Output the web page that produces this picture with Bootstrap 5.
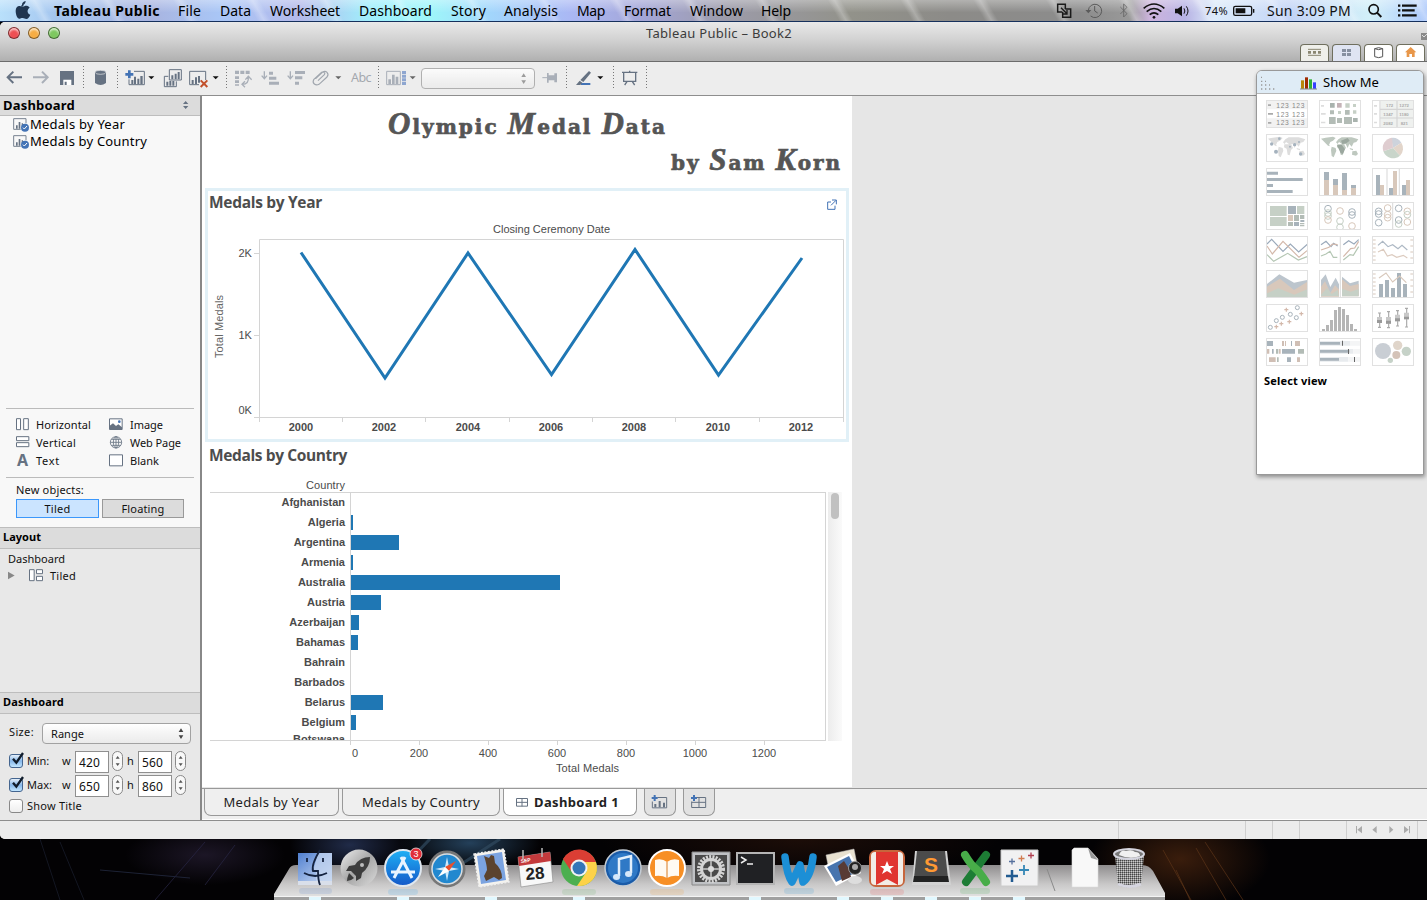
<!DOCTYPE html>
<html lang="en">
<head>
<meta charset="utf-8">
<title>Tableau Public - Book2</title>
<link href="https://cdn.jsdelivr.net/npm/bootstrap@5.3.0/dist/css/bootstrap.min.css" rel="stylesheet">
<style>
html,body{height:900px;overflow:hidden}
body{width:1427px;background:#000;font:11px/14px "Noto Sans","Open Sans",sans-serif;color:#111}
svg{display:block;flex:none}
svg text{font-family:"Liberation Sans",Arial,sans-serif}
[data-w]{white-space:nowrap;display:inline-block}
.menubar{height:22px;border-bottom:1px solid #16305c;background:
 linear-gradient(#ffffff55,#fff0 60%),
 repeating-linear-gradient(60deg,#fff0 0 34px,#ffffff44 40px,#fff0 46px 63px),
 linear-gradient(90deg,#b9e0fb 0,#a3c4ee 60px,#a8b4e0 150px,#a9c6f6 220px,#b4b9ea 300px,#a0effc 370px,#9ef6fa 430px,#a2d6fc 490px,#aab8f4 570px,#a4a6d8 640px,#9c9ba8 730px,#92928a 850px,#8c8b88 950px,#8c8c8c 1080px,#999 1130px,#cdb4dd 1150px,#b7b2e4 1185px,#dcebfa 1215px,#c3d4f6 1290px,#d2f0f9 1370px,#acc8fb 1427px)}
.menus{display:grid;grid-template-columns:124px 42px 50px 89px 92px 53px 73px 47px 66px 71px 60px;padding-left:22px;font-size:14px;line-height:21px;color:#000}
.win{height:817px;background:#ececec;border-radius:5px 0 0 5px;overflow:hidden}
.titlebar{height:40px;background:linear-gradient(#e9e9e9,#d2d2d2 45%,#b0b0b0);border-bottom:1px solid #6c6c6c}
.light{width:12px;height:12px;border-radius:50%;border:1px solid #0007;box-shadow:inset 0 2px 2px #fffa}
.pagetab{width:29px;height:17px;border:1px solid #6f6f5e;border-bottom:0;border-radius:4px 4px 0 0;background:#fff}
.tools{height:34px;border-bottom:1px solid #8e8e8e;background:#ededed;display:grid;padding:6px 0 0 0;
 grid-template-columns:28px 28px 26px 10px 24px 8px 38px 25px 38px 8px 26px 27px 24px 40px 27px 7px 37px 120px 24px 9px 38px 8px 25px 8px}
.dots{width:1px;height:23px;margin-left:1px;margin-top:-2px;background:repeating-linear-gradient(#777 0 1px,#0000 1px 3px)}
.aqua{border:1px solid #a2a2a2;border-radius:4px;background:linear-gradient(#fff,#f4f4f4 50%,#ebebeb)}
.side{width:202px;border-right:2px solid #888;background:#e8e8e8;height:724px}
.shead{height:21px;background:#dcdcdc;border-top:1px solid #bdbdbd;border-bottom:1px solid #bdbdbd;padding-left:3px;line-height:18px;font-weight:700;color:#000}
.pal{background:#f8f8f8}
.palgrid{display:grid;grid-template-columns:20px 73px 21px 60px;row-gap:0;grid-auto-rows:18px;line-height:18px}
.objbtn{height:19px;line-height:18px;text-align:center;border:1px solid #999;background:#dcdcdc;border-radius:0}
.objbtn.on{background:#cbe4ff;border-color:#3b97fb}
.num{width:34px;height:22px;border:1px solid #8f8f8f;background:#fff;padding:3px 0 0 3px;line-height:16px;font-size:12px}
.spin{width:11px;height:20px;border:1px solid #888;border-radius:6px;background:#f8f8f8}
.cbox{width:14px;height:14px;border:1px solid #888;border-radius:3px;background:linear-gradient(#fff,#eee)}
.cbox.on{border-color:#44658f;background:linear-gradient(#e5f0fa,#86b7ea 50%,#c2e6ff)}
.canvasarea{background:#e6e6e6;height:692px}
.sheet{width:650px;height:691px;background:#fff}
.dtitle{font-family:"DejaVu Serif",serif;font-weight:700;font-size:20px;line-height:34px;color:#555;-webkit-text-stroke:.7px #555}
.dtitle i{font-family:"Liberation Serif",serif;font-size:31px;font-style:italic}
.vhead{font:700 15.5px/20px "Open Sans","Noto Sans",sans-serif;color:#4d4d4d}
.ar{font-family:"Liberation Sans",Arial,sans-serif;color:#4b4b4b}
.yearbox{width:644px;height:254px;border:3px solid #e1f0f7;margin-left:3px}
.rows{height:249px;width:616px;margin-left:8px;border-top:1px solid #d4d4d4;border-bottom:1px solid #d4d4d4;border-right:1px solid #d4d4d4;overflow:hidden}
.brow{height:20px}
.brow>b{width:141px;padding-right:5px;text-align:right;line-height:18px;border-right:1px solid #d4d4d4;height:20px}
.brow:last-child>b{line-height:12px}
.brow>i{background:#1f77b4;height:15px;margin-top:2px}
.stab{height:27px;border:1px solid #999;border-top:0;border-radius:0 0 7px 7px;background:#efefef;font-size:13px;line-height:26px;color:#222}
.stab svg{margin-top:1px}
.stat{height:19px;border-top:1px solid #8e8e8e;background:#ececec}
.stat>span{border-left:1px solid #cfcfcf;height:18px}
.showme{position:absolute;left:1256px;top:70px;width:168px;height:405px;background:#fff;border:1px solid #999;border-radius:6px 6px 0 0;box-shadow:1px 2px 4px #0006}
.smhead{height:23px;background:#dfecf6;border-bottom:1px solid #b5b5b5;border-radius:5px 5px 0 0}
.thumbs{display:grid;grid-template-columns:53px 53px 42px;grid-auto-rows:34px;padding:6px 0 0 9px}
.desk{height:61px;background:
 radial-gradient(70px 26px at 470px 4px,#24405a,#0000),radial-gradient(60px 30px at 350px 6px,#202b48,#0000),
 radial-gradient(80px 30px at 205px 16px,#1c1626,#0000),radial-gradient(90px 50px at 1180px 20px,#3a1d0c,#0000),
 radial-gradient(200px 40px at 800px 0,#1c0d08,#0000),#030204}
</style>
</head>
<body>
<header class="menubar d-flex">
 <svg width="32" height="21" viewBox="15 0 96 63"><path fill="#1f3550" d="M86 14c-4-1-7 2-8 6 5 0 8-3 8-6zM92 3c-7 1-12 7-11 13 7-1 11-7 11-13zM62 32c0-11 8-16 15-13 4 2 7 2 11 0 5-3 12-1 16 4-9 6-8 17 2 21-3 7-7 13-12 13-4 0-6-3-11-3s-7 3-10 2C67 56 62 43 62 32z"/></svg>
 <nav class="menus">
  <b data-w="106">Tableau Public</b><span data-w="23">File</span><span data-w="31">Data</span><span data-w="70">Worksheet</span><span data-w="73">Dashboard</span><span data-w="35">Story</span><span data-w="54">Analysis</span><span data-w="28">Map</span><span data-w="47">Format</span><span data-w="53">Window</span><span data-w="30">Help</span>
 </nav>
 <div class="d-flex ms-auto" style="line-height:21px;width:372px;color:#111">
  <svg width="25" height="22" viewBox="225 0 75 66"><path d="M256 27V13h-23v23h14M256 27h16v25h-24V36" fill="none" stroke="#1a1a1a" stroke-width="4.500"/><path d="M243 23l18 18m0-11v12h-12" fill="none" stroke="#1a1a1a" stroke-width="4"/></svg>
  <svg width="36" height="22" viewBox="300 0 108 66"><g fill="none" stroke="#5b5b5b" stroke-width="3"><path d="M325 31a20 20 0 1 1 7 17"/><path d="M344 18v15l9 6"/></g><path fill="#5b5b5b" d="M316 30h18l-9 10z"/></svg>
  <svg width="24" height="22" viewBox="408 0 72 66"><path d="M421 21l20 20-10 10V12l10 10-20 20" fill="none" stroke="#666" stroke-width="2.500"/></svg>
  <svg width="31" height="22" viewBox="480 0 93 66"><g fill="none" stroke="#111" stroke-width="5"><path d="M491 25q31-26 62 0M500 35q22-19 44 0M509 44q13-11 26 0"/></g><circle cx="522" cy="52" r="4" fill="#111"/></svg>
  <svg width="31" height="22" viewBox="573 0 93 66"><path d="M585 26h8l13-9v32l-13-9h-8z" fill="#111"/><path d="M612 25q5 8 0 16M619 19q10 14 0 28" fill="none" stroke="#111" stroke-width="3"/></svg>
  <span style="width:30px;padding-left:3px;font-size:11px"><span data-w="23">74%</span></span>
  <svg width="31" height="22" viewBox="755 0 93 66"><rect x="760" y="19" width="54" height="27" rx="5" fill="none" stroke="#111" stroke-width="4"/><path d="M766 25h29v15h-29zM818 27h4v11h-4z" fill="#111"/></svg>
  <span style="width:99px;padding-left:4px;font-size:14px"><span data-w="84">Sun 3:09 PM</span></span>
  <svg width="31" height="22" viewBox="1150 0 93 66"><circle cx="1185" cy="28" r="14" fill="none" stroke="#111" stroke-width="5"/><path d="M1195 38l13 13" stroke="#111" stroke-width="6"/></svg>
  <svg width="28" height="22" viewBox="1243 0 84 66"><path d="M1258 17h7m5 0h44M1258 31h7m5 0h38M1258 46h7m5 0h44" stroke="#111" stroke-width="7"/></svg>
 </div>
</header>

<main class="win">
 <div class="titlebar d-flex">
  <div class="d-flex" style="width:640px;padding:5px 0 0 8px;gap:8px"><span class="light" style="background:#ee4f53"></span><span class="light" style="background:#f6ad44"></span><span class="light" style="background:#7ec860"></span></div>
  <div style="width:660px;font-size:13px;line-height:22px;color:#3b3b3b;padding-left:6px"><span data-w="146">Tableau Public – Book2</span></div>
  <div class="d-flex align-items-end" style="gap:3px;width:127px">
   <span class="pagetab" style="background:#efefea"><svg width="27" height="16" viewBox="963 138 81 48"><path d="M984 151h39M984 169h39" stroke="#8a8670" stroke-width="3"/><path d="M984 160h39" stroke="#8a8670" stroke-width="8" stroke-dasharray="9 6"/></svg></span>
   <span class="pagetab" style="background:#dfe4f2"><svg width="27" height="16" viewBox="1059 138 81 48"><path d="M1086 150h12v9h-12zM1101 150h12v9h-12zM1086 162h12v9h-12zM1101 162h12v9h-12z" fill="#8790a0"/></svg></span>
   <span class="pagetab"><svg width="27" height="16" viewBox="1155 138 81 48"><path d="M1184 149v24q12 6 24 0v-24q-12-6-24 0q12 6 24 0" fill="none" stroke="#555" stroke-width="3"/></svg></span>
   <span class="pagetab"><svg width="27" height="16" viewBox="1251 138 81 48"><path d="M1292 144l17 16h-5v14h-8v-9h-8v9h-8v-14h-5z" fill="#e8974a"/></svg></span>
   <svg width="6" height="39" viewBox="0 0 6 39" style="margin-left:-7px"><path d="M0 11h6v7H0z" fill="#8a8a8a"/><path d="M1 13l2 2 3-3" fill="none" stroke="#ddd"/></svg>
  </div>
 </div>
 <div class="tools">
  <svg width="28" height="20" viewBox="0 204 84 60"><path d="M66 232H24M40 215l-17 17 17 17" fill="none" stroke="#667282" stroke-width="6"/></svg>
  <svg width="28" height="20" viewBox="84 204 84 60"><path d="M99 232h42M126 215l17 17-17 17" fill="none" stroke="#a9afb8" stroke-width="6"/></svg>
  <svg width="26" height="20" viewBox="168 204 78 60"><path d="M180 213h42v42h-42z" fill="#667282"/><path d="M190 239h24v16h-24z" fill="#fff"/><path d="M194 245h6v10h-6z" fill="#667282"/></svg>
  <i class="dots"></i>
  <svg width="24" height="20" viewBox="276 204 72 60"><path d="M285 219v30q17 12 33 0v-30z" fill="#667282"/><ellipse cx="301.500" cy="217" rx="16" ry="6" fill="#667282" stroke="#e8e8e8" stroke-width="2"/></svg>
  <i class="dots"></i>
  <svg width="38" height="20" viewBox="372 204 114 60"><path d="M402 214h31v40h-46v-16" fill="none" stroke="#667282" stroke-width="3"/><path d="M394 240h6v12h-6zM402 230h6v22h-6zM412 236h6v16h-6zM421 228h7v24h-7z" fill="#667282"/><path d="M376 223h24M388 211v24" stroke="#4373b5" stroke-width="8"/><path d="M445 229h18l-9 9z" fill="#111"/></svg>
  <svg width="25" height="20" viewBox="486 204 75 60"><g fill="none" stroke="#667282" stroke-width="3"><path d="M508 209h36v31h-36zM505 229h-12v31h36v-16"/></g><path d="M514 226h6v12h-6zM524 221h6v17h-6zM533 216h6v22h-6zM499 245h6v12h-6zM508 243h6v14h-6zM517 243h6v14h-6z" fill="#667282"/></svg>
  <svg width="38" height="20" viewBox="561 204 114 60"><path d="M597 254h-28v-40h48v26" fill="none" stroke="#667282" stroke-width="3"/><path d="M575 240h6v12h-6zM585 232h6v20h-6zM594 228h6v20h-6z" fill="#667282"/><path d="M602 241l20 20m0-20l-20 20" stroke="#c2512c" stroke-width="6"/><path d="M638 229h18l-9 9z" fill="#111"/></svg>
  <i class="dots"></i>
  <svg width="26" height="20" viewBox="702 204 78 60"><path d="M708 217h48" stroke="#a9afb8" stroke-width="10" stroke-dasharray="12 4"/><path d="M714 229v28" stroke="#a9afb8" stroke-width="12" stroke-dasharray="8 4"/><path d="M730 253q20 0 18-22M739 239l9-10 10 10M738 244l-9 9 9 9" fill="none" stroke="#a9afb8" stroke-width="4"/></svg>
  <svg width="27" height="20" viewBox="780 204 81 60"><path d="M796 214v20M788 227l8 9 8-9" fill="none" stroke="#a9afb8" stroke-width="4"/><path d="M810 215h12v9h-12zM810 230h22v9h-22zM810 245h30v9h-30z" fill="#a9afb8"/></svg>
  <svg width="24" height="20" viewBox="861 204 72 60"><path d="M874 214v20M866 227l8 9 8-9" fill="none" stroke="#a9afb8" stroke-width="4"/><path d="M888 213h30v9h-30zM888 229h22v9h-22zM888 245h12v9h-12z" fill="#a9afb8"/></svg>
  <svg width="40" height="20" viewBox="933 204 120 60"><path d="M950 236l20-19q8-6 14 0t0 14l-24 22q-8 4-14-1t-2-13l24-22q5-3 8 0t0 7l-19 18" fill="none" stroke="#a0a6ae" stroke-width="3.500"/><path d="M1009 229h18l-9 9z" fill="#666"/></svg>
  <span style="font-size:12.500px;line-height:20px;color:#a4a8ae;padding-left:1px"><span data-w="20">Abc</span></span>
  <i class="dots"></i>
  <svg width="37" height="20" viewBox="1149 204 111 60"><path d="M1157 214h41v40h-41z" fill="none" stroke="#a9afb8" stroke-width="3"/><path d="M1162 238h8v14h-8zM1173 224h8v28h-8zM1184 230h8v22h-8z" fill="#a9afb8"/><path d="M1209 213v42" stroke="#8ea6d0" stroke-width="12" stroke-dasharray="9 2"/><path d="M1226 229h18l-9 9z" fill="#666"/></svg>
  <div class="aqua d-flex justify-content-end" style="width:114px;height:21px;opacity:.8;margin-left:0"><svg width="14" height="18" viewBox="0 0 42 54"><path d="M4 24l7-11 7 11zM4 34l7 11 7-11z" fill="#888"/></svg></div>
  <svg width="24" height="20" viewBox="480 204 72 60"><path d="M484 233h14" stroke="#a9afb8" stroke-width="3"/><path d="M498 219h5v7h17v-6h8v27h-8v-6h-17v7h-5z" fill="#a9afb8"/></svg>
  <i class="dots"></i>
  <svg width="38" height="20" viewBox="579 204 114 60"><path d="M600 255h28v-6h-28z" fill="#4373b5"/><path d="M624 213l6 5-23 28-9-6zM596 242l8 6-6 7h-13z" fill="#667282"/><path d="M649 229h18l-9 9z" fill="#111"/></svg>
  <i class="dots"></i>
  <svg width="25" height="20" viewBox="717 204 75 60"><path d="M723 217h46M728 217v27h36v-27M746 212v4M738 245l-7 10M754 245l7 10" fill="none" stroke="#667282" stroke-width="4"/></svg>
  <i class="dots"></i>
 </div>

 <div class="d-flex" style="height:724px">
  <aside class="side d-flex flex-column">
   <div class="pal" style="height:431px">
    <div class="shead d-flex" style="font-size:13px;height:20px;border-top:0"><span data-w="72">Dashboard</span><svg width="8" height="18" viewBox="0 0 24 54" style="margin-left:107px"><path d="M3 24l8-9 8 9zM3 30l8 9 8-9z" fill="#667282"/></svg></div>
    <div style="height:292px;padding:0 0 0 13px;font-size:13px;line-height:17px;color:#000">
     <div class="d-flex"><svg width="17" height="17" viewBox="39 348 51 51"><path d="M62 388H41v-32h37v14" fill="none" stroke="#778290" stroke-width="3"/><path d="M48 376h5v10h-5zM56 366h5v20h-5zM65 370h4v8h-4z" fill="#667282"/><circle cx="75" cy="383" r="12" fill="#4373b5"/><path d="M69 383l4 4 8-9" fill="none" stroke="#fff" stroke-width="3"/></svg><span data-w="95">Medals by Year</span></div>
     <div class="d-flex"><svg width="17" height="17" viewBox="39 348 51 51"><path d="M62 388H41v-32h37v14" fill="none" stroke="#778290" stroke-width="3"/><path d="M48 376h5v10h-5zM56 366h5v20h-5zM65 370h4v8h-4z" fill="#667282"/><circle cx="75" cy="383" r="12" fill="#4373b5"/><path d="M69 383l4 4 8-9" fill="none" stroke="#fff" stroke-width="3"/></svg><span data-w="117">Medals by Country</span></div>
    </div>
    <div style="margin:0 6px;border-top:1px solid #bbb;border-bottom:1px solid #bbb;height:70px;padding:7px 0 0 10px">
     <div class="palgrid">
      <svg width="14" height="18" viewBox="48 62 42 54"><path d="M49.500 70h12v33h-12zM71 70h14v33h-14z" fill="#fff" stroke="#667282" stroke-width="3"/></svg><span data-w="55">Horizontal</span>
      <svg width="14" height="18" viewBox="327 62 42 54"><path d="M328.500 70.500h38v32h-38z" fill="#fff" stroke="#667282" stroke-width="3"/><path d="M328 101V92l11-8 9 8 7-5 11 9v6z" fill="#667282"/><circle cx="358" cy="79" r="4" fill="#4373b5"/></svg><span data-w="33">Image</span>
      <svg width="14" height="18" viewBox="48 116 42 54"><path d="M49.500 124h37v12h-37zM49.500 142h37v12h-37z" fill="#fff" stroke="#667282" stroke-width="3"/></svg><span data-w="40">Vertical</span>
      <svg width="14" height="18" viewBox="327 116 42 54"><g fill="none" stroke="#667282" stroke-width="2.500"><circle cx="348" cy="141" r="17"/><ellipse cx="348" cy="141" rx="8" ry="17"/><path d="M331 141h34M348 124v34M334 132h28M334 150h28"/></g></svg><span data-w="51">Web Page</span>
      <b style="font-size:16px;line-height:17px;color:#667282;padding-left:1px">A</b><span data-w="24">Text</span>
      <svg width="14" height="18" viewBox="327 170 42 54"><path d="M328.500 178.500h39v33h-39z" fill="#fff" stroke="#667282" stroke-width="3"/></svg><span data-w="29">Blank</span>
     </div>
    </div>
    <div style="padding:5px 0 0 16px"><span data-w="68">New objects:</span>
     <div class="d-flex" style="gap:3px;margin-top:2px"><div class="objbtn on" style="width:83px"><span data-w="26">Tiled</span></div><div class="objbtn" style="width:82px"><span data-w="43">Floating</span></div></div>
    </div>
   </div>
   <div class="shead" style="height:22px;line-height:18px"><span data-w="38">Layout</span></div>
   <div style="height:143px;padding:0 0 0 8px;line-height:17px">
    <div style="padding-top:1px"><span data-w="57">Dashboard</span></div>
    <div class="d-flex"><svg width="42" height="17" viewBox="24 513 126 51"><path d="M22 526v25l22-12.500z" fill="#888"/><path d="M88.500 521h14v33h-14zM109.500 521h18v12h-18zM109.500 541h18v13h-18z" fill="#fff" stroke="#667282" stroke-width="3"/></svg><span data-w="26">Tiled</span></div>
   </div>
   <div class="shead" style="height:22px;line-height:18px"><span data-w="61">Dashboard</span></div>
   <div style="padding:9px 0 0 9px">
    <div class="d-flex" style="height:28px"><span style="width:33px;line-height:18px"><span data-w="25">Size:</span></span><div class="aqua d-flex justify-content-between" style="width:149px;height:21px;padding-left:8px;line-height:19px"><span data-w="33">Range</span><svg width="14" height="19" viewBox="0 0 42 57"><path d="M8 24l7-11 7 11zM8 34l7 11 7-11z" fill="#444"/></svg></div></div>
    <div class="d-flex" style="height:24px"><span class="cbox on" style="margin-top:3px"><svg width="16" height="14" viewBox="0 0 48 42" style="margin-top:-3px;overflow:visible"><path d="M9 20l10 12L39 3" fill="none" stroke="#111d2c" stroke-width="7"/></svg></span><span style="width:39px;padding:3px 0 0 4px"><span data-w="22">Min:</span></span><span style="width:13px;padding-top:3px"><span data-w="8">w</span></span><span class="num"><span data-w="21">420</span></span><span class="spin" style="margin:0 4px 0 3px"><svg width="9" height="18" viewBox="0 0 27 54"><path d="M8 20l6-8 6 8zM8 34l6 8 6-8z" fill="#555"/></svg></span><span style="width:11px;padding-top:3px">h</span><span class="num"><span data-w="21">560</span></span><span class="spin" style="margin-left:3px"><svg width="9" height="18" viewBox="0 0 27 54"><path d="M8 20l6-8 6 8zM8 34l6 8 6-8z" fill="#555"/></svg></span></div>
    <div class="d-flex" style="height:24px"><span class="cbox on" style="margin-top:3px"><svg width="16" height="14" viewBox="0 0 48 42" style="margin-top:-3px;overflow:visible"><path d="M9 20l10 12L39 3" fill="none" stroke="#111d2c" stroke-width="7"/></svg></span><span style="width:39px;padding:3px 0 0 4px"><span data-w="25">Max:</span></span><span style="width:13px;padding-top:3px"><span data-w="8">w</span></span><span class="num"><span data-w="21">650</span></span><span class="spin" style="margin:0 4px 0 3px"><svg width="9" height="18" viewBox="0 0 27 54"><path d="M8 20l6-8 6 8zM8 34l6 8 6-8z" fill="#555"/></svg></span><span style="width:11px;padding-top:3px">h</span><span class="num"><span data-w="21">860</span></span><span class="spin" style="margin-left:3px"><svg width="9" height="18" viewBox="0 0 27 54"><path d="M8 20l6-8 6 8zM8 34l6 8 6-8z" fill="#555"/></svg></span></div>
    <div class="d-flex"><span class="cbox"></span><span style="padding-left:4px"><span data-w="55">Show Title</span></span></div>
   </div>
  </aside>

  <section class="flex-grow-1">
   <div class="canvasarea">
    <div class="sheet">
     <div style="height:92px;padding-top:11px">
      <div class="dtitle" style="padding-left:186px;height:36px"><span data-w="279"><i>O</i>lympic <i>M</i>edal <i>D</i>ata</span></div>
      <div class="dtitle" style="padding-left:469px;height:36px"><span data-w="171">by <i>S</i>am <i>K</i>orn</span></div>
     </div>
     <div class="yearbox">
      <div class="d-flex justify-content-between" style="height:26px;padding:1px 8px 0 1px"><span class="vhead"><span data-w="113">Medals by Year</span></span><svg width="12" height="22" viewBox="0 0 36 66"><path d="M15 30H5v22h22V41M18 24h13v13M30 25L15 40" fill="none" stroke="#4373b5" stroke-width="3"/></svg></div>
      <svg width="638" height="222" viewBox="208 217 638 222" font-size="11" fill="#4b4b4b">
       <text x="493" y="233" textLength="117">Closing Ceremony Date</text>
       <path d="M259.500 422V239.500H843.500V422M254 417.500H844M254 253.500h5M254 335.500h5M342.500 418v4M425.500 418v4M509.500 418v4M592.500 418v4M675.500 418v4M759.500 418v4" fill="none" stroke="#d4d4d4"/>
       <text x="238.500" y="257">2K</text><text x="238.500" y="339">1K</text><text x="238.500" y="414">0K</text>
       <text transform="translate(223 358) rotate(-90)" textLength="63" fill="#666">Total Medals</text>
       <path d="M301 252.500L385 378L468 253L551.500 374.500L635 249.500L718.500 375L802 258" fill="none" stroke="#1f77b4" stroke-width="3"/>
       <g font-weight="700" text-anchor="middle"><text x="301" y="431">2000</text><text x="384" y="431">2002</text><text x="468" y="431">2004</text><text x="551" y="431">2006</text><text x="634" y="431">2008</text><text x="718" y="431">2010</text><text x="801" y="431">2012</text></g>
      </svg>
     </div>
     <div style="padding:3px 0 0 7px;height:35px"><span class="vhead"><span data-w="138">Medals by Country</span></span></div>
     <div class="ar text-end" style="width:143px;height:15px;line-height:16px"><span data-w="39">Country</span></div>
     <div class="d-flex">
      <div class="rows ar" id="bars"></div>
      <div style="width:14px;margin-left:2px;height:249px;background:linear-gradient(90deg,#ececec,#fafafa);padding:1px 3px"><div style="width:8px;height:26px;border-radius:4px;background:#c1c1c1"></div></div>
     </div>
     <svg width="640" height="46" viewBox="202 741 640 46" font-size="11" fill="#4b4b4b" text-anchor="middle">
      <path d="M350.500 741v4M419.500 741v4M488.500 741v4M557.500 741v4M626.500 741v4M695.500 741v4M764.500 741v4" stroke="#d4d4d4"/>
      <text x="355" y="757">0</text><text x="419" y="757">200</text><text x="488" y="757">400</text><text x="557" y="757">600</text><text x="626" y="757">800</text><text x="695" y="757">1000</text><text x="764" y="757">1200</text>
      <text x="587.500" y="772" textLength="63">Total Medals</text>
     </svg>
    </div>
   </div>
   <div class="d-flex" style="height:32px;background:#efefef;padding-left:2px;border-top:1px solid #999;border-bottom:1px solid #fff">
    <div class="stab text-center" style="width:135px"><span data-w="96">Medals by Year</span></div>
    <div class="stab text-center" style="width:158px;margin-left:3px"><span data-w="118">Medals by Country</span></div>
    <div class="stab d-flex bg-white" style="width:134px;margin-left:3px;padding-left:12px"><svg width="18" height="26" viewBox="48 180 54 78"><path d="M49.500 205.500h33v23h-33zM66 205v24M49 217h34" fill="none" stroke="#667282" stroke-width="3"/></svg><b data-w="85">Dashboard 1</b></div>
    <div class="stab" style="width:32px;margin-left:7px;background:#e2e2e2"><svg width="30" height="25" viewBox="435 180 90 75"><path d="M472 202.500h28v31h-43v-19" fill="none" stroke="#667282" stroke-width="3"/><path d="M463 222h6v10h-6zM476 213h6v19h-6zM489 218h6v14h-6z" fill="#667282"/><path d="M455 204h18M464 195v18" stroke="#4373b5" stroke-width="6"/></svg></div>
    <div class="stab" style="width:32px;margin-left:7px;background:#e2e2e2"><svg width="30" height="25" viewBox="552 180 90 75"><path d="M590 202.500h27v30h-42v-18M597 202v30M575 217h42" fill="none" stroke="#667282" stroke-width="3"/><path d="M573 204h18M582 195v18" stroke="#4373b5" stroke-width="6"/></svg></div>
   </div>
  </section>
 </div>
 <footer class="stat d-flex justify-content-end"><span style="width:127px"></span><span style="width:27px"></span><span style="width:27px"></span><span style="width:47px"></span><span style="width:71px"><svg width="70" height="18" viewBox="738 63 210 54"><path d="M765 78h3v22h-3zM783 78v22l-14-11zM827 78v22l-13-11zM865 78v22l12-11zM909 78v22l14-11zM924 78h3v22h-3z" fill="#aaa"/></svg></span><span style="width:10px"></span></footer>
</main>

<div class="desk">
 <svg width="1427" height="61" viewBox="0 839 1427 61" >
  <defs>
   <linearGradient id="shelf" x1="0" y1="0" x2="0" y2="1"><stop offset="0" stop-color="#8f8d8e"/><stop offset=".6" stop-color="#c9c8c8"/><stop offset="1" stop-color="#e2e2e2"/></linearGradient>
   <linearGradient id="blu" x1="0" y1="0" x2="0" y2="1"><stop offset="0" stop-color="#1fb0f5"/><stop offset="1" stop-color="#1458c8"/></linearGradient>
   <linearGradient id="fin" x1="0" y1="0" x2="1" y2="1"><stop offset="0" stop-color="#4f7fd0"/><stop offset="1" stop-color="#d0def4"/></linearGradient>
   <linearGradient id="sil" x1="0" y1="0" x2="1" y2="1"><stop offset="0" stop-color="#eee"/><stop offset=".5" stop-color="#a6a6a6"/><stop offset="1" stop-color="#ddd"/></linearGradient>
   <pattern id="mesh" width="2" height="2" patternUnits="userSpaceOnUse"><rect width="2" height="2" fill="#8a8a8a"/><rect width="1" height="1" fill="#444"/><rect x="1" y="1" width="1" height="1" fill="#ccc"/></pattern>
  </defs>
  <g stroke="#5d3518" fill="none" opacity=".7"><path d="M1163 850l28 50M1205 842l38 58M1196 848l30 52M1176 870l14 30"/><path d="M205 842l-50 58M235 845l-30 40" stroke="#2a2848"/><path d="M100 870l90 8" stroke="#28304a" /><path d="M430 839l-25 26M500 839l-40 26" stroke="#304a60" stroke-width="3"/><path d="M40 839l20 61M60 842l24 58" stroke="#1b2030"/></g>
  <path d="M296 865H1142Q1149 865 1153 871L1165 893V897H274V894L289 869Q291 865 296 865z" fill="url(#shelf)"/>
  <path d="M274 897h891v3H274z" fill="#a0a0a0"/><path d="M274 896.500h891" stroke="#f4f4f4"/>
  <path d="M309 898.500h12M397 898.500h12M485 898.500h12M573 898.500h12M749 898.500h12M837 898.500h12M881 898.500h12M925 898.500h12M969 898.500h12M1013 898.500h12" stroke="#e1f8ff" stroke-width="3"/>
  <g opacity=".15"><rect x="299" y="888" width="33" height="6" rx="3" fill="#4f7fd0"/><rect x="388" y="889" width="30" height="6" rx="3" fill="#1fa0f5"/><rect x="562" y="889" width="34" height="6" rx="3" fill="#5a5"/><rect x="650" y="889" width="34" height="6" rx="3" fill="#f7941d"/><rect x="784" y="888" width="30" height="6" rx="3" fill="#1c90d5"/><rect x="870" y="889" width="34" height="6" rx="3" fill="#e33"/><rect x="960" y="888" width="30" height="6" rx="3" fill="#3a4"/></g>
  <!-- Finder -->
  <path d="M298 853h34v28h-34z" fill="url(#fin)"/><path d="M318 853h14v28h-16v-9h-3q3-12 5-19z" fill="#c5d6f0" opacity=".7"/><path d="M298 881h34v4h-34z" fill="#d9dfea"/><path d="M320 850q-9 15-7 21h5q0 9 2 14M304 873q11 6 23 0M307 858v4M323 858v4" fill="none" stroke="#15233f" stroke-width="1.800"/>
  <!-- Launchpad -->
  <circle cx="359" cy="868" r="18.500" fill="url(#sil)"/><path d="M370 857q-10 0-15 8l-6 1-3 5 5 0 5 5 0 5 5-3 1-5q8-6 8-16zM349 873q-2 5-2 8 4 0 7-3z" fill="#3d3d3d"/><circle cx="362" cy="865" r="2" fill="#bbb"/>
  <!-- App Store -->
  <circle cx="403" cy="868" r="18" fill="url(#blu)" stroke="#dfe7ef" stroke-width="2"/><path d="M405 857l-11 21M401 857l11 21M391 872h24" stroke="#e9f4ff" stroke-width="3"/><circle cx="416" cy="854" r="6" fill="#e12f39" stroke="#fff" stroke-width=".7"/><text x="416" y="857" font-size="9" fill="#fff" text-anchor="middle">3</text>
  <!-- Safari -->
  <circle cx="447" cy="869" r="17" fill="#2288cf" stroke="#777" stroke-width="3"/><circle cx="447" cy="869" r="15" fill="none" stroke="#ddd" stroke-width="1.500"/><path d="M447 857l2 10 10 2-10 2-2 10-2-10-10-2 10-2z" fill="#cfe9fa"/><path d="M456 861l-7 10-4-4z" fill="#e8502c"/><path d="M438 877l7-10 4 4z" fill="#fff"/>
  <!-- Mail -->
  <path d="M474 854l30-5 5 33-30 5z" fill="#f5f3ee" stroke="#eee" stroke-dasharray="2 1.500" stroke-width="1.500"/><path d="M477 856l25-4 4 28-25 4z" fill="#7ba3e0"/><path d="M484 856l5 2 2-3 3 1 1 7q7 6 7 15l-3 2-5-3-8 4-2-5 3-6q0-5-3-14z" fill="#5b432e"/>
  <!-- Calendar -->
  <path d="M518 857l32-5 3 30-32 5z" fill="#f8f8f8" stroke="#888" stroke-width=".6"/><path d="M518 857l32-5 1 9-32 5z" fill="#c33a3c"/><path d="M523 850v9M542 848v9" stroke="#bbb" stroke-width="1.500"/><text x="521" y="863" font-size="5" fill="#fff" font-weight="700" transform="rotate(-8 521 863)">SEP</text><text x="526" y="880" font-size="17" font-weight="700" fill="#222" transform="rotate(-5 526 880)" textLength="19">28</text>
  <!-- Chrome -->
  <circle cx="579" cy="868" r="18" fill="#4caf50"/><path d="M563 859A18 18 0 0 1 596 862H579L571 871z" fill="#db3e34"/><path d="M596 862A18 18 0 0 1 577 886L587 871L584 862z" fill="#fdd249"/><circle cx="579" cy="868" r="8.500" fill="#f2f2f2"/><circle cx="579" cy="868" r="6.500" fill="#3576b8"/>
  <!-- iTunes -->
  <circle cx="623" cy="868" r="18" fill="#1a5ba8" stroke="#c4ccd4" stroke-width="1.500"/><circle cx="623" cy="868" r="15" fill="#2f79c6"/><path d="M619 876V859l12-3v17" fill="none" stroke="#e4f0fc" stroke-width="2.500"/><ellipse cx="616.500" cy="877" rx="3.500" ry="3" fill="#d6e8fa"/><ellipse cx="628.500" cy="874" rx="3.500" ry="3" fill="#d6e8fa"/>
  <!-- iBooks -->
  <circle cx="667" cy="868" r="18" fill="#f78f25" stroke="#fff" stroke-width="2"/><path d="M655 860q7-2 12 2 5-4 12-2v16q-7-1-12 2-5-3-12-2z" fill="#fffaf2"/><path d="M667 862v16" stroke="#d87b20"/>
  <!-- System Preferences -->
  <path d="M692 852h38v33h-38z" fill="#bfc1c4" stroke="#888"/><path d="M695 855h32v27h-32z" fill="#4a4a4a"/><circle cx="711" cy="869" r="12" fill="none" stroke="#d4d4d4" stroke-width="4" stroke-dasharray="2 1.200"/><circle cx="711" cy="869" r="9.500" fill="none" stroke="#d4d4d4" stroke-width="3"/><path d="M711 861v16M703 869h16" stroke="#aaa" stroke-width="2"/><circle cx="711" cy="869" r="3" fill="#ddd"/>
  <!-- Terminal -->
  <path d="M737 853h37v31h-37z" fill="#202124" stroke="#b5b5b5" stroke-width="2"/><path d="M741 857l5 3-5 3M747 864h6" fill="none" stroke="#eee" stroke-width="1.500"/>
  <!-- Word -->
  <path d="M785 857q2 18 7 25l8-17 3 17q8-6 10-25" fill="none" stroke="#1c8fd6" stroke-width="7.500" stroke-linejoin="round" stroke-linecap="round"/>
  <!-- iPhoto -->
  <path d="M826 855l28-6 4 20-28 6z" fill="#e8e1d0" stroke="#bbb" stroke-width=".5"/><path d="M824 866l26-13 11 20-25 13z" fill="#fff"/><path d="M827 867l22-11 8 16-21 10z" fill="#4774ae"/><path d="M838 866l6-5 5 8 2 8-9 4z" fill="#583b34"/><circle cx="855" cy="868" r="6.500" fill="#222" stroke="#999"/><ellipse cx="855" cy="880" rx="7" ry="4" fill="#ddd"/><circle cx="855" cy="867" r="3" fill="#aaa"/>
  <!-- Wunderlist -->
  <rect x="869" y="850" width="36" height="37" rx="7" fill="#c7653c"/><rect x="871" y="852" width="32" height="33" rx="4" fill="#f2ece6"/><path d="M876 852h22v33l-11-6-11 6z" fill="#e03530"/><path d="M887 861l2 5h5l-4 3 2 5-5-3-5 3 2-5-4-3h5z" fill="#fff"/>
  <!-- Sublime Text -->
  <path d="M915 851h32l4 34h-39z" fill="#d2d2d2"/><path d="M917 851h28l3 27h-34z" fill="#4b4b4b"/><path d="M914 876h34l1 6h-36z" fill="#222"/><text x="931" y="872" font-size="21" font-weight="700" fill="#ff9933" text-anchor="middle">S</text>
  <!-- Excel -->
  <path d="M986 855l-20 27" stroke="#1d7d35" stroke-width="8" stroke-linecap="round"/><path d="M965 855q6 10 10 13t11 14" fill="none" stroke="#48ad49" stroke-width="8" stroke-linecap="round"/>
  <!-- Tableau -->
  <path d="M1001 850h37v36h-37z" fill="#f1f1f2" stroke="#ccc"/><path d="M1006 876h12M1012 870v12" stroke="#225b91" stroke-width="2.500"/><path d="M1019 870h10M1024 865v10" stroke="#3587b6" stroke-width="1.800"/><path d="M1009 861.500h6M1012 858.500v6" stroke="#56709d" stroke-width="1.300"/><path d="M1018.500 858.500h6M1021.500 855.500v6" stroke="#d17c50" stroke-width="1.300"/><path d="M1028 855.500h6M1031 852.500v6" stroke="#b13f50" stroke-width="1.300"/>
  <path d="M1047 869l8 22" stroke="#8a8a8a"/>
  <!-- Document -->
  <path d="M1072 850l2-2h14l10 11v28h-26z" fill="#f8f8f8" stroke="#ddd" stroke-width=".6"/><path d="M1088 848l3 10 7 2z" fill="#999"/>
  <!-- Trash -->
  <path d="M1115 855h29l-3 30q-12 5-23 0z" fill="url(#mesh)"/><ellipse cx="1129" cy="854" rx="15" ry="5" fill="#777" stroke="#d5d5df" stroke-width="2"/><path d="M1119 855q2-6 7-4 6-2 9 1 5 0 5 4-10 4-21-1z" fill="#f1f1f1"/><path d="M1118 884q11 5 23 0" fill="none" stroke="#d5d5df" stroke-width="3"/>
 </svg>
</div>

<aside class="showme">
 <div class="smhead d-flex" style="font-size:13px;line-height:22px;color:#000">
  <svg width="66" height="22" viewBox="21 17 198 66"><path d="M33 36h3M33 48h15M33 59h27M33 71h42" stroke="#999" stroke-width="4" stroke-dasharray="4 8"/><path d="M153 45h9v25h-9z" fill="#b8860b"/><path d="M165 36h9v34h-9z" fill="#a02a00"/><path d="M177 42h9v28h-9z" fill="#2eb135"/><path d="M189 51h9v19h-9z" fill="#3440ff"/><path d="M150 71h51" stroke="#555" stroke-width="2"/></svg>
  <span data-w="56">Show Me</span></div>
 <div class="thumbs" id="thumbs"></div>
 <b data-w="63" style="margin:2px 0 0 7px;color:#000">Select view</b>
</aside>

<script>
// Medal bars: country name and bar length in pixels
const medals = [["Afghanistan",0],["Algeria",2],["Argentina",48],["Armenia",2],["Australia",209],["Austria",30],["Azerbaijan",8],["Bahamas",7],["Bahrain",0],["Barbados",0],["Belarus",32],["Belgium",5],["Botswana",0]];
document.getElementById("bars").innerHTML = medals.map(([n,w]) => `<div class="brow d-flex"><b>${n}</b><i style="width:${w}px"></i></div>`).join("");

// Show Me chart thumbnails
const g="#b3bcb6", s="#a8b3bb", t="#d8c8bb", m="#c6d0c6";
const ring=(c,a)=>`<g fill="none" stroke="${c}" stroke-width="3">${a.map(p=>`<circle cx="${p[0]}" cy="${p[1]}" r="10"/>`).join("")}</g>`;
const ln=(c,d)=>`<path d="${d}" fill="none" stroke="${c}" stroke-width="3.5"/>`;
const fl=(c,d)=>`<path d="${d}" fill="${c}"/>`;
const land="M6 14l14-3 22-3 8 4-8 8-8 4-4 9 4 4-7-2-8-8-8-8zM38 38l12 4 2 8-8 20-6-4-2-18zM58 16l10-6 30 0 20 6-6 8-8 2-6 12-7-8-5 12-6-12-8 2-12-8-4 6-5-5zM55 31l20-1 6 12-6 6-4 16-6-2-3-18-8-4zM100 52l12-2 5 10-6 5-12-3zM92 42l10 3 0 4-9-3z";
const T=[
 fl("#f2f2f2","M3 3h120v25H3zM3 55h120v26H3z")+fl("#aaa","M6 13h9v5H6zM6 39h15v5H6zM6 66h10v5H6z")+`<g font-size="20" fill="#888"><text x="31" y="23" textLength="84">123 123</text><text x="31" y="50" textLength="84">123 123</text><text x="31" y="75" textLength="84">123 123</text></g>`,
 fl("#ddd","M6 15h9v5H6zM6 39h14v5H6zM6 65h13v5H6z")+fl("#a9b3ae","M33 9h14v14H33zM102 54h14v12h-14z")+fl("#c4b3b7","M54 9h14v14H54z")+fl(m,"M79 10h13v13H79zM102 12h9v9h-9zM57 33h9v9h-9zM102 31h10v10h-10z")+fl(g,"M33 31h12v12H33zM78 30h14v14H78zM30 51h20v21H30zM54 54h15v15H54zM75 51h24v21H75z"),
 fl("#eff1ef","M27 3h96v78H27z")+ln("#d4d4d4","M24 3v78M75 3v78M24 28h99M24 54h99")+fl("#ddd","M6 15h9v5H6zM6 39h9v5H6zM6 65h9v5H6z")+`<g font-size="13" fill="#aaa" font-weight="700"><text x="42" y="21">172</text><text x="82" y="21">1272</text><text x="34" y="48">1347</text><text x="82" y="48">1180</text><text x="34" y="74">2082</text><text x="86" y="74">821</text></g>`,
 fl("#ddd",land)+`<g fill="#a5b2be"><circle cx="17" cy="30" r="5"/><circle cx="30" cy="53" r="6"/><circle cx="86" cy="32" r="5"/><circle cx="99" cy="24" r="3"/><circle cx="104" cy="60" r="5"/><circle cx="40" cy="14" r="4"/><circle cx="72" cy="38" r="3"/></g>`,
 fl("#bec8bf",land)+fl("#9ba79e","M66 20l20-8 6 8-10 8-12 2zM54 34l14-2 10 14-6 14-7-2z"),
 `<path d="M63 42L57 12A31 31 0 0 1 88 26z" fill="#cdd3dc"/><path d="M63 42L88 26A31 31 0 0 1 84 65z" fill="#e2d5ca"/><path d="M63 42L84 65A31 31 0 0 1 34 52z" fill="#c9d5ca"/><path d="M63 42L34 52A31 31 0 0 1 60 11z" fill="#dfcdd0"/>`,
 fl(s,"M3 11h33v9H3zM3 30h107v9H3zM3 48h18v9H3zM3 66h77v9H3z"),
 fl(s,"M15 12h15v25H15zM42 33h15v18H42zM69 15h15v51H69zM96 51h15v9H96z")+fl(t,"M15 36h15v45H15zM42 51h15v30H42zM69 66h15v15H69zM96 60h15v21H96z"),
 ln("#ddd","M45 3v78M82 3v78")+fl(s,"M12 21h12v60H12zM51 60h12v21H51zM90 51h12v30H90z")+fl(t,"M24 51h12v30H24zM63 9h12v72H63zM102 36h12v45h-12z"),
 fl(m,"M12 12h50v30H12zM12 45h50v27H12zM93 12h22v24H93z")+fl(s,"M66 12h24v24H66zM84 60h15v12H84zM103 54h12v6h-12z")+fl(t,"M66 39h15v18H66z")+fl(g,"M84 39h15v18H84zM102 39h13v12h-13zM66 60h15v12H66zM102 63h13v4h-13zM102 69h13v4h-13z"),
 ring(s,[[27,20],[99,30],[99,39]])+ring(m,[[27,33],[27,42],[63,57],[63,76]])+ring(t,[[63,27],[27,54],[99,72]]),
 ln("#ddd","M62 3v78")+ring(s,[[20,28],[20,36],[80,19],[80,54],[20,62]])+ring(t,[[47,18],[47,38],[47,47],[106,28],[106,60]])+ring(m,[[80,66],[106,38]]),
 ln("#9aa9ba","M3 24l14-14 34 36 22-22 25 24 27-24")+ln("#d3b8aa","M3 30l16 24 32-38 48 48 24-20")+ln("#b4c6b3","M3 56l20 20 42-24 32 20 26-10"),
 ln("#ddd","M64 3v78")+ln("#9aa9ba","M6 26l15-10 15 16 8-10 12 8M73 26l16-12 16 10 14-13")+ln("#d3b8aa","M6 42l24-8 10-10 16 2M73 62l22-24 12-2 12-20")+ln("#b4c6b3","M6 60l15-6 12-8 10 18 12 0M73 72l20-16 10 2 16-26"),
 ln("#adb8c4","M18 28l14-12 16 16 14-6 16 12 12-10 16 14")+ln("#dccbbf","M18 48l16-8 12 20 14-4 14 8 20-6 12 8")+ln("#d8c8bb","M3 12h8M3 24h8M3 36h8M3 48h8M3 60h8M3 72h8M115 12h8M115 30h8M115 48h8M115 66h8"),
 fl("#bcc5cd","M3 42L40 13l44 25 39-8v50H3z")+fl(t,"M3 50L42 26l42 34 39-24v44H3z")+fl("#c6d0c6","M3 70l34-15 48 19 38-16v23H3z"),
 fl("#bcc5cd","M6 30L20 13l14 38 16-28 10 20v36H6zM69 20l24 20 26-8v45H69z")+fl(t,"M6 50L18 34l16 34 14-22 12 12v22H6zM69 28l24 20 26-6v37H69z")+fl("#c6d0c6","M6 74l18-20 14 18 18-12 4 18H6zM69 56l26 9 24-8v22H69z")+ln("#ddd","M64 3v78"),
 fl(s,"M21 42h12v39H21zM39 30h12v51H39zM57 54h12v27H57zM75 9h12v72H75zM93 42h12v39H93z")+ln(t,"M21 24L42 9l20 27 21-18 20 20M3 12h8M3 24h8M3 36h8M3 48h8M3 60h8M3 72h8M115 12h8M115 30h8M115 48h8M115 66h8"),
 `<g fill="none" stroke="${s}" stroke-width="3"><circle cx="13" cy="70" r="6"/><circle cx="31" cy="50" r="6"/><circle cx="49" cy="40" r="6"/><circle cx="73" cy="31" r="6"/><circle cx="91" cy="41" r="6"/><circle cx="94" cy="11" r="6"/></g>`+ln("#d3b8aa","M25 68h12m-6-6v12M40 59h12m-6-6v12M55 17h12m-6-6v12M64 53h12m-6-6v12M100 29h12m-6-6v12"),
 fl("#b5b5b5","M9 75h9v6H9zM21 63h9v18h-9zM33 48h9v33h-9zM45 18h9v63h-9zM57 9h9v72h-9zM69 15h9v66h-9zM81 33h9v48h-9zM93 60h9v21h-9zM105 75h9v6h-9z"),
 ln("#aaa","M18 27h9m-4 0v43m-5 0h9M45 23h9m-4 0v48m-5 0h9M72 20h9m-4 0v46m-5 0h9M99 13h9m-4 0v56m-5 0h9")+fl("#c8c8c8","M15 39h15v18H15zM42 39h15v20H42zM69 32h15v20H69zM96 26h15v20H96z")+fl("#999","M15 48h15v9H15zM42 50h15v9H42zM69 43h15v9H69zM96 38h15v8H96z"),
 fl(s,"M3 9h18v15H3zM75 9h3v15h-3zM18 33h5v14h-5zM48 33h39v14H48zM63 58h12v14H63z")+fl("#d0bfb5","M48 9h6v15h-6zM57 9h3v15h-3zM87 9h15v15H87zM3 33h7v14H3zM39 33h5v14h-5zM9 58h20v14H9zM93 58h9v14h-9z")+fl(g,"M30 33h7v14h-7zM96 33h18v14H96zM33 58h5v14h-5z"),
 fl("#e8ebee","M3 9h90v14H3zM3 33h100v14H3zM3 57h85v14H3z")+fl("#f4f5f6","M93 9h30v14H93zM103 33h20v14h-20zM88 57h35v14H88z")+fl(s,"M3 12h60v8H3zM3 36h88v8H3zM3 60h57v8H3z")+fl("#666","M69 8h3v15h-3zM87 33h3v15h-3zM105 57h3v15h-3z"),
 `<circle cx="33" cy="39" r="24" fill="#c9ced4"/><circle cx="77" cy="22" r="14" fill="#e0d5ca"/><circle cx="103" cy="40" r="14" fill="#c6d2c8"/><circle cx="73" cy="51" r="12" fill="#d4c3b8"/><circle cx="55" cy="67" r="8" fill="#c6d2c8"/>`
];
document.getElementById("thumbs").innerHTML = T.map(x => `<svg width="42" height="28" viewBox="0 0 126 84"><rect x="1.5" y="1.5" width="123" height="81" fill="#fff"/>${x}<rect x="1.5" y="1.5" width="123" height="81" fill="none" stroke="#e1e1e1" stroke-width="3"/></svg>`).join("");

// Track each label to its set width
document.querySelectorAll("[data-w]").forEach(e => {
  e.style.width = "max-content";
  const w = e.getBoundingClientRect().width, n = e.textContent.length;
  e.style.letterSpacing = ((+e.dataset.w - w) / n).toFixed(3) + "px";
});
</script>
<script src="https://cdn.jsdelivr.net/npm/bootstrap@5.3.0/dist/js/bootstrap.bundle.min.js"></script>
</body>
</html>
